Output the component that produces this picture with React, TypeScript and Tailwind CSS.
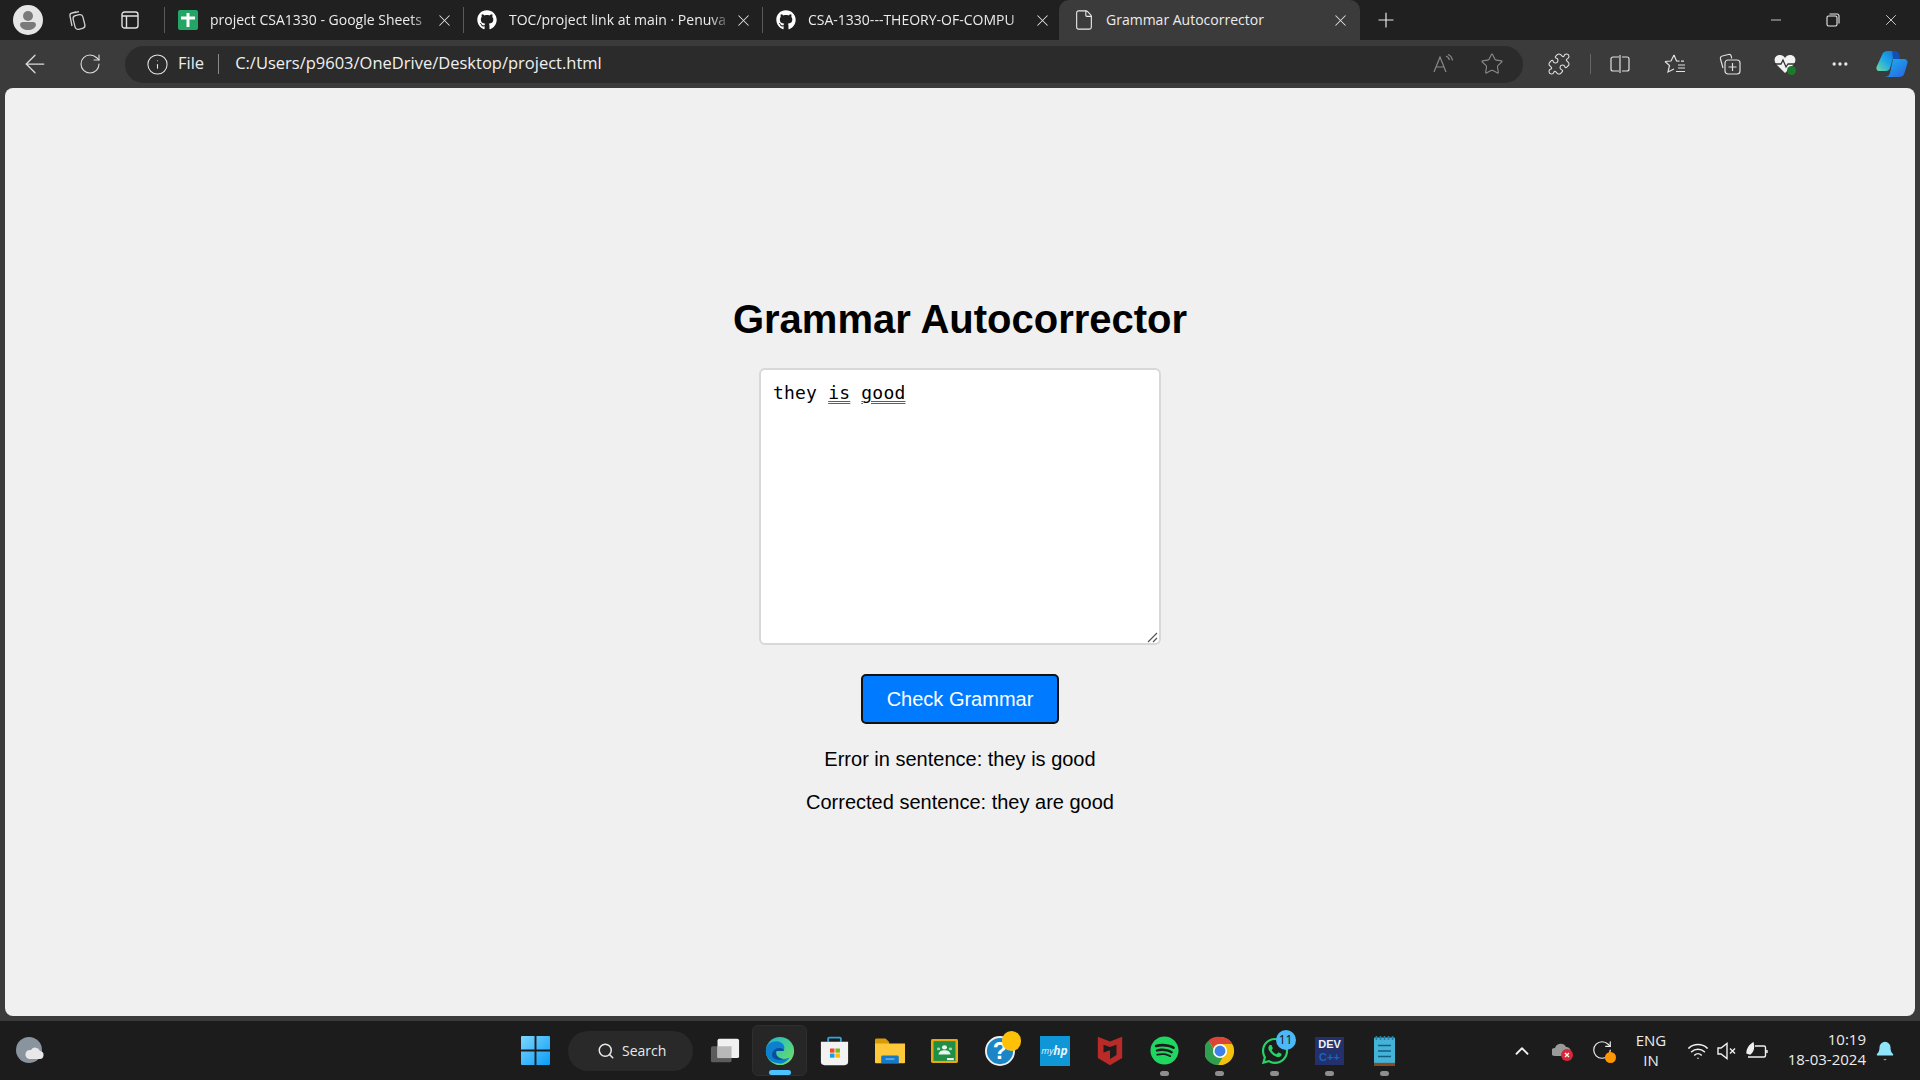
import React from 'react';
import { ArrowLeft, RotateCw, Info, Star, Minus, X, Plus, Search, ChevronUp, Wifi, Puzzle, Ellipsis, File, Bell } from 'lucide-react';
import { FaGithub, FaSpotify, FaWhatsapp } from 'react-icons/fa';

const tabs = [
  { title: 'project CSA1330 - Google Sheets', icon: 'sheets' },
  { title: 'TOC/project link at main · Penuva', icon: 'github' },
  { title: 'CSA-1330---THEORY-OF-COMPU', icon: 'github' },
];

const SheetsIcon = () => (
  <svg width="20" height="20" viewBox="0 0 20 20">
    <rect width="20" height="20" rx="2" fill="#23a566" />
    <path d="M3 8h14M10 3v14" stroke="#fff" strokeWidth="3" />
  </svg>
);

const EdgeIcon = () => (
  <svg width="30" height="30" viewBox="0 0 34 34">
    <defs>
      <linearGradient id="edgeTop" x1="0" y1="0" x2="1" y2="1">
        <stop offset="0" stopColor="#1fb5d8" />
        <stop offset="0.6" stopColor="#4fd08a" />
        <stop offset="1" stopColor="#7fe05a" />
      </linearGradient>
    </defs>
    <circle cx="17" cy="17" r="16" fill="url(#edgeTop)" />
    <path d="M1 17C1 9 8 5 14 6c6 1 10 6 7 11h-8c-2 5 3 9 8 9 3 0 5-1 7-2-3 5-8 8-13 7C7 30 1 25 1 17z" fill="#0c7fd0" />
    <path d="M8 22c0-6 5-10 11-8 2 1 3 2 2 3h-8c-2 5 3 9 8 9-7 3-13-1-13-4z" fill="#0a4f9e" />
  </svg>
);

const ChromeIcon = () => (
  <svg width="30" height="30" viewBox="0 0 34 34">
    <circle cx="17" cy="17" r="16" fill="#f4c20d" />
    <path d="M17 1a16 16 0 0 1 14 8H17a8 8 0 0 0-7.5 5L4 5a16 16 0 0 1 13-4z" fill="#db4437" />
    <path d="M4 5l7 12a8 8 0 0 0 9 7l-5 9A16 16 0 0 1 4 5z" fill="#2f9e4f" />
    <circle cx="17" cy="17" r="8" fill="#fff" />
    <circle cx="17" cy="17" r="6.2" fill="#3f7fe8" />
  </svg>
);

const TaskSlot = ({ children, running, active }: { children: React.ReactNode; running?: boolean; active?: boolean }) => (
  <div className={`relative flex h-[51px] w-[55px] items-center justify-center rounded-md ${active ? 'border border-[#2e2e2e] bg-[#262626]' : ''}`}>
    {children}
    {running && <span className="absolute bottom-0 h-[5px] w-[9px] rounded-full bg-[#8f8f8f]" />}
    {active && <span className="absolute bottom-0 h-[5px] w-[22px] rounded-full bg-[#4cc2ff]" />}
  </div>
);

export default function App() {
  return (
    <div className="flex h-[1080px] w-[1920px] flex-col overflow-hidden bg-[#3b3b3b] font-['Open_Sans',sans-serif] text-[#ececec]">
      {/* tab strip */}
      <div className="flex h-[40px] items-center bg-[#202020]">
        <div className="ml-[13px] flex h-[30px] w-[30px] items-center justify-center overflow-hidden rounded-full bg-[#e6e6e6]">
          <svg width="30" height="30" viewBox="0 0 30 30">
            <circle cx="15" cy="11" r="5" fill="#7a7a7a" />
            <path d="M7 19a3 3 0 0 1 3-2h10a3 3 0 0 1 3 2c0 4-4 6-8 6s-8-2-8-6z" fill="#7a7a7a" />
          </svg>
        </div>
        <div className="ml-[22px] flex w-[24px] justify-center">
          <svg width="22" height="22" viewBox="0 0 22 22" fill="none" stroke="#d0d0d0" strokeWidth="1.3">
            <rect x="8" y="6" width="10" height="14" rx="3" transform="rotate(-14 13 13)" />
            <path d="M6 17 4 7c-.3-1.5.5-2.7 2-3l4-1M9 3.5l4-.8" />
          </svg>
        </div>
        <div className="ml-[29px] flex w-[24px] justify-center">
          <svg width="18" height="18" viewBox="0 0 18 18" fill="none" stroke="#e0e0e0" strokeWidth="1.4">
            <rect x="1" y="1" width="16" height="16" rx="2.5" />
            <path d="M1 5h16M5.5 5v12" />
          </svg>
        </div>
        <div className="ml-[22px] h-[26px] w-px bg-[#5a5a5a]" />
        {tabs.map((tab, i) => (
          <div key={tab.title} className="flex h-[40px] w-[299px] items-center pl-[13px]">
            <div className="flex w-[20px] justify-center">
              {tab.icon === 'sheets' ? <SheetsIcon /> : <FaGithub size={20} className="text-white" />}
            </div>
            <span className="mb-[2px] ml-[12px] w-[223px] overflow-hidden whitespace-nowrap text-[14px] [mask-image:linear-gradient(to_right,black_90%,transparent)]">{tab.title}</span>
            <X size={19} strokeWidth={1.3} className="ml-[2px] text-[#e0e0e0]" />
            {i < 2 && <div className="ml-[9px] h-[26px] w-px bg-[#5a5a5a]" />}
          </div>
        ))}
        <div className="-ml-[3px] flex h-[40px] w-[301px] items-center rounded-t-[10px] bg-[#3b3b3b] pl-[14px]">
          <File size={22} strokeWidth={1.2} className="text-[#ececec]" />
          <span className="mb-[2px] ml-[11px] w-[225px] text-[14px]">Grammar Autocorrector</span>
          <X size={19} strokeWidth={1.3} className="text-[#e0e0e0]" />
        </div>
        <Plus size={24} strokeWidth={1.2} className="ml-[14px] text-[#e8e8e8]" />
        <div className="ml-auto flex items-center">
          <div className="flex w-[57px] justify-center"><Minus size={16} strokeWidth={1.2} /></div>
          <div className="flex w-[58px] justify-center">
            <svg width="14" height="14" viewBox="0 0 14 14" fill="none" stroke="#ececec" strokeWidth="1.1">
              <rect x="1" y="3" width="10" height="10" rx="1.5" />
              <path d="M3.5 1H11a2 2 0 0 1 2 2v7.5" />
            </svg>
          </div>
          <div className="flex w-[58px] justify-center"><X size={18} strokeWidth={1.1} /></div>
        </div>
      </div>

      {/* toolbar */}
      <div className="flex h-[48px] items-center">
        <div className="flex w-[70px] justify-center"><ArrowLeft size={30} strokeWidth={1} className="text-[#dcdcdc]" /></div>
        <div className="flex w-[40px] justify-center"><RotateCw size={24} strokeWidth={1.1} className="text-[#dcdcdc]" /></div>
        <div className="ml-[15px] flex h-[37px] w-[1398px] items-center rounded-full bg-[#2b2b2b] pl-[21px]">
          <Info size={23} strokeWidth={1.1} className="text-[#e6e6e6]" />
          <span className="mb-[1px] ml-[9px] text-[16.5px] leading-none">File</span>
          <div className="ml-[14px] h-[20px] w-px bg-[#8a8a8a]" />
          <span className="mb-[1px] ml-[16px] text-[16.5px] leading-none text-[#f0f0f0]">C:/Users/p9603/OneDrive/Desktop/project.html</span>
          <svg className="ml-auto" width="20" height="20" viewBox="0 0 20 20" fill="none" stroke="#8a8a8a" strokeWidth="1.2">
            <path d="M1 18 7 3l6 15M3 13h8M13 2c2 1 3 2 3.500 4M15 0.500c2.500 1 4 3 4.500 6" />
          </svg>
          <Star size={24} strokeWidth={1.1} className="mr-[19px] ml-[27px] text-[#8a8a8a]" />
        </div>
        <div className="ml-[24px] flex w-[24px] justify-center"><Puzzle size={24} strokeWidth={1.1} className="text-[#e0e0e0]" /></div>
        <div className="ml-[19px] h-[20px] w-px bg-[#666666]" />
        <div className="ml-[19px] flex w-[20px] justify-center">
          <svg width="20" height="18" viewBox="0 0 20 18" fill="none" stroke="#e0e0e0" strokeWidth="1.2">
            <path d="M9 2H3a2 2 0 0 0-2 2v10a2 2 0 0 0 2 2h6M10 0v18M12 2h5a2 2 0 0 1 2 2v10a2 2 0 0 1-2 2h-5" />
          </svg>
        </div>
        <div className="ml-[34px] flex w-[22px] justify-center">
          <svg width="22" height="20" viewBox="0 0 22 20" fill="none" stroke="#e0e0e0" strokeWidth="1.2">
            <path d="M10 1l2.500 6 3 .2M1 7.500l6-.5L10 1M1 7.500l4.500 4L4 18l6-3M14 11h7M14 14h7M12 17.500h9M17 7.200h3" />
          </svg>
        </div>
        <div className="ml-[33px] flex w-[22px] justify-center">
          <svg width="22" height="22" viewBox="0 0 22 22" fill="none" stroke="#e0e0e0" strokeWidth="1.2">
            <path d="M4 15 1.500 6c-.4-1.500.4-2.700 1.800-3l6-1.500c1.500-.3 2.700.4 3 1.800l.4 2" />
            <rect x="6" y="7" width="15" height="14" rx="3" />
            <path d="M13.500 10v8M9.500 14h8" />
          </svg>
        </div>
        <div className="relative ml-[33px] flex w-[22px] justify-center">
          <svg width="22" height="20" viewBox="0 0 22 20">
            <path d="M11 19 2 10C-1 6 1 1 6 1c2 0 4 1 5 3 1-2 3-3 5-3 5 0 7 5 4 9z" fill="#f2f2f2" />
            <path d="M0 10h7l2-4 3 7 2-3h8" fill="none" stroke="#333333" strokeWidth="1.3" />
          </svg>
          <span className="absolute top-[12px] left-[13px] h-[9px] w-[9px] rounded-full bg-[#1d7a2a]" />
        </div>
        <div className="ml-[33px] flex w-[22px] justify-center"><Ellipsis size={20} strokeWidth={2} className="text-[#e8e8e8]" /></div>
        <div className="ml-[25px]">
          <svg width="32" height="28" viewBox="0 0 32 28">
            <defs>
              <linearGradient id="copA" x1="0" y1="1" x2="1" y2="0">
                <stop offset="0" stopColor="#6fdc9a" />
                <stop offset="0.5" stopColor="#1ea7e8" />
                <stop offset="1" stopColor="#1277d8" />
              </linearGradient>
              <linearGradient id="copB" x1="0" y1="0" x2="1" y2="1">
                <stop offset="0" stopColor="#19b5f0" />
                <stop offset="1" stopColor="#2a63e0" />
              </linearGradient>
            </defs>
            <path d="M6 5c1-3 3-4 6-4h7l-5 17c-.6 2-2 3-4 3H3c-2 0-3-2-2.500-4z" fill="url(#copA)" />
            <path d="M17 9h11c2.500 0 4 2 3.500 4l-3 10c-.8 3-3 4-6 4H8c3 0 5-1 6-4z" fill="url(#copB)" />
            <path d="M16 1h3c2 0 4 2 5 6l-1 2h-6z" fill="#1250b8" />
          </svg>
        </div>
      </div>

      {/* page */}
      <main className="mx-[5px] flex h-[928px] flex-col items-center rounded-[8px] bg-[#f0f0f0] pt-[207px] font-['Liberation_Sans',Arial,sans-serif] text-black">
        <h1 className="text-[40px] leading-[48px] font-bold">Grammar Autocorrector</h1>
        <div className="relative mt-[25px] h-[277px] w-[402px] rounded-[6px] border-2 border-[#d8d8d8] bg-white px-[12px] py-[11px] font-['DejaVu_Sans_Mono',monospace] text-[18px] leading-[24px] tracking-[0.2px]">
          they{' '}
          <span className="underline decoration-[#3b5bdb] decoration-double decoration-1 underline-offset-2">is</span>{' '}
          <span className="underline decoration-[#3b5bdb] decoration-double decoration-1 underline-offset-2">good</span>
          <svg className="absolute right-[1px] bottom-0" width="11" height="11" viewBox="0 0 11 11" stroke="#555555" strokeWidth="1.2">
            <path d="M1 10 10 1M6 10l4-4" />
          </svg>
        </div>
        <button className="mt-[29px] h-[50px] w-[198px] rounded-[5px] border-2 border-[#111111] bg-[#007bff] text-[20px] text-white">Check Grammar</button>
        <p className="mt-[24px] text-[20px] leading-[23px]">Error in sentence: they is good</p>
        <p className="mt-[20px] text-[20px] leading-[23px]">Corrected sentence: they are good</p>
      </main>

      {/* taskbar */}
      <footer className="relative mt-[5px] flex h-[59px] items-center bg-[#1c1c1c]">
        <div className="absolute left-[15px]">
          <svg width="30" height="30" viewBox="0 0 30 30">
            <ellipse cx="14" cy="14" rx="13" ry="13" fill="#8a949e" />
            <path d="M14 23h10a4 4 0 0 0 1-8 5 5 0 0 0-9-1 4.500 4.500 0 0 0-2 9z" fill="#e8e8e8" />
          </svg>
        </div>

        <div className="ml-[508px] flex items-center">
          <TaskSlot>
            <svg width="29" height="29" viewBox="0 0 30 30">
              <defs>
                <linearGradient id="winG" x1="0" y1="0" x2="1" y2="1">
                  <stop offset="0" stopColor="#7dd6ff" />
                  <stop offset="1" stopColor="#0a9cf5" />
                </linearGradient>
              </defs>
              <path d="M0 1a1 1 0 0 1 1-1h13v14H0zM16 0h13a1 1 0 0 1 1 1v13H16zM0 16h14v14H1a1 1 0 0 1-1-1zM16 16h14v13a1 1 0 0 1-1 1H16z" fill="url(#winG)" />
            </svg>
          </TaskSlot>
          <div className="mr-[4px] ml-[5px] flex h-[40px] w-[125px] items-center rounded-full bg-[#292929] pl-[29px] text-[14px] text-[#e8e8e8]">
            <Search size={18} strokeWidth={2} />
            <span className="ml-[7px]">Search</span>
          </div>
          <TaskSlot>
            <svg width="30" height="27" viewBox="0 0 32 32" preserveAspectRatio="none">
              <rect x="1" y="11" width="22" height="19" rx="2" fill="#5c5c5c" />
              <rect x="8" y="2" width="23" height="23" rx="2" fill="#f0f0f0" />
              <rect x="8" y="11" width="15" height="14" fill="#b8b8b8" />
            </svg>
          </TaskSlot>
          <TaskSlot active><EdgeIcon /></TaskSlot>
          <TaskSlot>
            <svg width="29" height="30" viewBox="0 0 32 36" preserveAspectRatio="none">
              <path d="M9 7V3a1 1 0 0 1 1-1h12a1 1 0 0 1 1 1v4" fill="none" stroke="#2aa8e0" strokeWidth="2" />
              <path d="M1 7h30v24a4 4 0 0 1-4 4H5a4 4 0 0 1-4-4z" fill="#f2f2f2" />
              <rect x="11" y="15" width="5" height="5" fill="#e8502a" />
              <rect x="17" y="15" width="5" height="5" fill="#7db818" />
              <rect x="11" y="21" width="5" height="5" fill="#10a0e8" />
              <rect x="17" y="21" width="5" height="5" fill="#ffb900" />
            </svg>
          </TaskSlot>
          <TaskSlot>
            <svg width="30" height="27" viewBox="0 0 34 38" preserveAspectRatio="none">
              <path d="M0 4a2 2 0 0 1 2-2h10l4 5v4H0z" fill="#d99a08" />
              <path d="M0 9h34v27a1 1 0 0 1-1 1H1a1 1 0 0 1-1-1z" fill="#fdc83a" />
              <path d="M7 37v-9a2 2 0 0 1 2-2h16a2 2 0 0 1 2 2v9z" fill="#1678c8" />
              <path d="M12 31h10" stroke="#8fd0f5" strokeWidth="1.500" />
            </svg>
          </TaskSlot>
          <TaskSlot>
            <svg width="27" height="24" viewBox="0 0 32 34" preserveAspectRatio="none">
              <rect width="32" height="34" rx="2" fill="#e8a812" />
              <rect x="3" y="3" width="26" height="28" fill="#1f8f48" />
              <circle cx="16" cy="12" r="3" fill="#e8f5e8" />
              <circle cx="9" cy="14" r="2" fill="#a5d8b0" />
              <circle cx="23" cy="14" r="2" fill="#a5d8b0" />
              <path d="M9 22c0-4 3-6 7-6s7 2 7 6z" fill="#e8f5e8" />
              <rect x="19" y="27" width="8" height="3" fill="#f2f2f2" />
            </svg>
          </TaskSlot>
          <TaskSlot>
            <div className="relative">
              <svg width="30" height="30" viewBox="0 0 32 32">
                <circle cx="16" cy="16" r="15" fill="#1a86c8" stroke="#f0f0f0" strokeWidth="2" />
                <text x="16" y="25" textAnchor="middle" fontSize="25" fontWeight="700" fill="#fff" fontFamily="Liberation Sans">?</text>
              </svg>
              <span className="absolute -top-[5px] -right-[6px] h-[20px] w-[19px] rounded-full bg-[#ffc107]" />
            </div>
          </TaskSlot>
          <TaskSlot>
            <div className="flex h-[30px] w-[30px] items-center justify-center bg-[#0f96d6] text-[9px] text-[#e8f5fb] italic">my<span className="text-[12px] font-bold">hp</span></div>
          </TaskSlot>
          <TaskSlot>
            <svg width="26" height="30" viewBox="0 0 32 38" preserveAspectRatio="none">
              <path d="M1 1l15 6 15-6v27L16 37 1 28z" fill="#b92a28" />
              <path d="M8 11l8 3 8-3v13l-8 5V18l-8 3z" fill="#1c1c1c" />
            </svg>
          </TaskSlot>
          <TaskSlot running><FaSpotify size={29} className="text-[#1ed760]" /></TaskSlot>
          <TaskSlot running><ChromeIcon /></TaskSlot>
          <TaskSlot running>
            <div className="relative">
              <FaWhatsapp size={30} className="text-[#25d366]" />
              <span className="absolute -top-[6px] -right-[6px] flex h-[20px] w-[20px] items-center justify-center rounded-full bg-[#4cb8f5] text-[12px] text-[#111111]">11</span>
            </div>
          </TaskSlot>
          <TaskSlot running>
            <div className="flex h-[28px] w-[29px] flex-col items-center bg-[#23306b] font-['Liberation_Sans',sans-serif] text-[11px] leading-[13px] font-bold">
              <span className="mt-[1px] text-[#f0f0f0]">DEV</span>
              <span className="text-[#1565c0]">C++</span>
            </div>
          </TaskSlot>
          <TaskSlot running>
            <svg width="21" height="30" viewBox="0 0 26 38" preserveAspectRatio="none">
              <rect y="2" width="26" height="33" rx="1" fill="#45b3d8" />
              <rect y="34" width="26" height="4" fill="#8a4a20" />
              <path d="M3 0v5M8 0v5M13 0v5M18 0v5M23 0v5" stroke="#2a7fa0" strokeWidth="2" />
              <path d="M5 12h16M5 19h16M5 26h16" stroke="#105f80" strokeWidth="2" />
            </svg>
          </TaskSlot>
        </div>

        <div className="ml-auto flex items-center">
          <ChevronUp size={22} strokeWidth={2} className="text-[#f0f0f0]" />
          <div className="relative ml-[19px] h-[22px] w-[22px]">
            <svg width="22" height="22" viewBox="0 0 22 22">
              <path d="M3 16a4 4 0 0 1 0-8 6 6 0 0 1 11-1 4 4 0 0 1 4 6v3z" fill="#9a9a9a" />
              <circle cx="15" cy="15" r="6" fill="#d6283a" />
              <path d="M13 13l4 4M17 13l-4 4" stroke="#fff" strokeWidth="1.300" />
            </svg>
          </div>
          <div className="relative ml-[17px] h-[24px] w-[22px]">
            <RotateCw size={22} strokeWidth={1.3} className="text-[#f0f0f0]" />
            <span className="absolute right-[-3px] bottom-0 h-[11px] w-[11px] rounded-full bg-[#ff9800]" />
          </div>
          <div className="mb-[2px] ml-[14px] flex w-[48px] flex-col items-center text-[15px] leading-[20px]">
            <span>ENG</span>
            <span>IN</span>
          </div>
          <Wifi size={22} strokeWidth={1.7} className="ml-[12px] text-[#f0f0f0]" />
          <svg className="ml-[8px]" width="20" height="18" viewBox="0 0 20 18" fill="none" stroke="#f0f0f0" strokeWidth="1.4">
            <path d="M1 6v6h3l6 4.500V1.500L4 6zM13 6.500l5 5M18 6.500l-5 5" />
          </svg>
          <svg className="ml-[9px]" width="22" height="18" viewBox="0 0 22 18" fill="none" stroke="#f0f0f0" strokeWidth="1.4">
            <path d="M9 4h9a1.500 1.500 0 0 1 1.500 1.500v8A1.500 1.500 0 0 1 18 15H2M21 8v3" />
            <path d="M1 11c0-5 3-8 6-10 1 4 1 8-3 11z" fill="#f0f0f0" />
          </svg>
          <div className="mb-[3px] ml-[10px] flex w-[88px] flex-col items-end text-[15px] leading-[20px]">
            <span>10:19</span>
            <span>18-03-2024</span>
          </div>
          <Bell size={22} fill="#8fe4fb" strokeWidth={0} className="mr-[24px] ml-[8px]" />
        </div>
      </footer>
    </div>
  );
}
